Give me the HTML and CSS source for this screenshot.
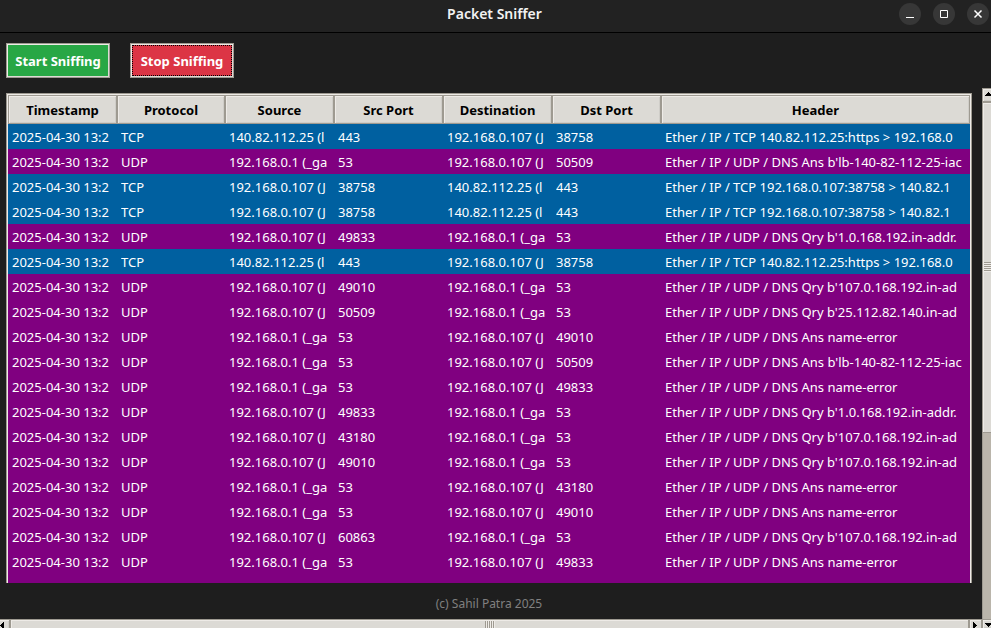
FILE: index.html
```
<!DOCTYPE html>
<html lang="en">
<head>
<meta charset="utf-8">
<title>Packet Sniffer</title>
<link rel="stylesheet" href="styles.css">
</head>
<body>
<div class="window">
  <header class="titlebar">
    <h1 class="title">Packet Sniffer</h1>
    <div class="window-controls">
      <button class="control" type="button" aria-label="Minimize"><svg viewBox="0 0 22 22"><path d="M7 14.5h8"/></svg></button>
      <button class="control" type="button" aria-label="Maximize"><svg viewBox="0 0 22 22"><path d="M7.5 7.5h7v7h-7z"/></svg></button>
      <button class="control" type="button" aria-label="Close"><svg viewBox="0 0 22 22"><path class="cross" d="M7.5 7.5l7 7m0-7l-7 7"/></svg></button>
    </div>
  </header>
  <div class="toolbar">
    <button class="action start" type="button">Start Sniffing</button>
    <button class="action stop" type="button">Stop Sniffing</button>
  </div>
  <div class="view">
    <main class="content">
      <div class="tree">
        <table class="packets">
          <colgroup><col class="c-a"><col class="c-b"><col class="c-a"><col class="c-a"><col class="c-a"><col class="c-a"><col></colgroup>
          <thead><tr><th>Timestamp</th><th>Protocol</th><th>Source</th><th>Src Port</th><th>Destination</th><th>Dst Port</th><th>Header</th></tr></thead>
          <tbody id="rows"></tbody>
        </table>
      </div>
      <footer class="footer">(c) Sahil Patra 2025</footer>
    </main>
    <div class="vscroll">
      <span class="vbutton"><svg class="arrow" viewBox="0 0 9 5"><path d="M4 0h1v1h1v1h1v1h1v1H1V3h1V2h1V1h1z"/></svg></span>
      <div class="vtrack"><div class="vthumb"></div></div>
    </div>
    <div class="hscroll">
      <span class="hbutton left"><svg class="side" viewBox="0 0 5 8"><path d="M4 0v7H3V6H2V5H1V4H0V3h1V2h1V1h1V0z"/></svg></span>
      <div class="hthumb"></div>
      <span class="hbutton right"><svg class="side" viewBox="0 0 5 8"><path d="M0 0h1v1h1v1h1v1h1v1H3v1H2v1H1v1H0z"/></svg></span>
    </div>
    <span class="down"><svg class="arrow" viewBox="0 0 9 5"><path d="M1 0h7v1H7v1H6v1H5v1H4V3H3V2H2V1H1z"/></svg></span>
  </div>
</div>
<script src="packets.js"></script>
</body>
</html>
```
FILE: packets.js
```
const time = "2025-04-30 13:2";
const local = "192.168.0.107 (J";
const gateway = "192.168.0.1 (_ga";
const remote = "140.82.112.25 (l";
const https = "Ether / IP / TCP 140.82.112.25:https > 192.168.0";
const reply = "Ether / IP / TCP 192.168.0.107:38758 > 140.82.1";
const dns = "Ether / IP / UDP / DNS ";
const nameError = dns + "Ans name-error";
const ansLb = dns + "Ans b'lb-140-82-112-25-iac";
const qryGateway = dns + "Qry b'1.0.168.192.in-addr.";
const qryLocal = dns + "Qry b'107.0.168.192.in-ad";
const qryRemote = dns + "Qry b'25.112.82.140.in-ad";

const packets = [
  [time, "TCP", remote, 443, local, 38758, https],
  [time, "UDP", gateway, 53, local, 50509, ansLb],
  [time, "TCP", local, 38758, remote, 443, reply],
  [time, "TCP", local, 38758, remote, 443, reply],
  [time, "UDP", local, 49833, gateway, 53, qryGateway],
  [time, "TCP", remote, 443, local, 38758, https],
  [time, "UDP", local, 49010, gateway, 53, qryLocal],
  [time, "UDP", local, 50509, gateway, 53, qryRemote],
  [time, "UDP", gateway, 53, local, 49010, nameError],
  [time, "UDP", gateway, 53, local, 50509, ansLb],
  [time, "UDP", gateway, 53, local, 49833, nameError],
  [time, "UDP", local, 49833, gateway, 53, qryGateway],
  [time, "UDP", local, 43180, gateway, 53, qryLocal],
  [time, "UDP", local, 49010, gateway, 53, qryLocal],
  [time, "UDP", gateway, 53, local, 43180, nameError],
  [time, "UDP", gateway, 53, local, 49010, nameError],
  [time, "UDP", local, 60863, gateway, 53, qryLocal],
  [time, "UDP", gateway, 53, local, 49833, nameError],
  ["", "", "", "", "", "", ""]
];

const body = document.getElementById("rows");
for (const packet of packets) {
  const row = body.insertRow();
  row.className = packet[1] === "TCP" ? "tcp" : "udp";
  for (const value of packet) {
    const text = document.createElement("div");
    text.className = "cell";
    text.textContent = value;
    row.insertCell().append(text);
  }
}
```
FILE: styles.css
```
* { box-sizing: border-box; }

:root {
  --frame: #dcdad5;
  --light: #eeebe7;
  --shade: #cfcdc8;
  --edge: #9e9a91;
  --trough: #bab5ab;
}

body {
  margin: 0;
  background: #1e1e1e;
  font-family: "Noto Sans", "Liberation Sans", sans-serif;
  font-size: 13px;
  color: #fff;
}

.window {
  display: flex;
  flex-direction: column;
  height: 100vh;
  overflow: hidden;
}

.titlebar {
  flex: none;
  display: grid;
  grid-template-columns: 1fr auto 1fr;
  align-items: center;
  height: 33px;
  padding: 0 2px 4px 0;
  background: #222;
  border-bottom: 1px solid #000;
}

.title {
  grid-column: 2;
  margin: 0;
  font-size: 14px;
  line-height: 20px;
  font-weight: 600;
  color: #f2f2f2;
}

.window-controls {
  display: flex;
  justify-content: flex-end;
  gap: 12px;
}

.control {
  width: 22px;
  height: 22px;
  padding: 0;
  border: 0;
  border-radius: 50%;
  background: #373737;
}

.control svg {
  display: block;
  width: 22px;
  height: 22px;
  fill: none;
  stroke: #fff;
}

.control .cross { stroke-width: 1.5; }

.toolbar {
  flex: none;
  display: flex;
  gap: 20px;
  padding: 10px 6px;
}

.action {
  width: 104px;
  height: 35px;
  padding: 0;
  font-family: inherit;
  font-size: 13px;
  font-weight: 700;
  color: #fff;
  white-space: nowrap;
  border: 1px solid var(--edge);
  box-shadow: inset 1px 1px var(--light), inset -1px -1px var(--frame);
}

.start { background: #28a745; }

.stop {
  background: #dc3545;
  outline: 1px dotted #000;
  outline-offset: -3px;
}

.view {
  flex: 1;
  min-height: 0;
  display: grid;
  grid-template-columns: minmax(0, 1fr) 9px;
  grid-template-rows: minmax(0, 1fr) 9px;
}

.content {
  display: flex;
  flex-direction: column;
  min-height: 0;
  padding: 5px 10px 0 6px;
}

.tree {
  flex: 1;
  min-height: 0;
  overflow: hidden;
  border: 1px solid var(--edge);
  border-bottom: 0;
  box-shadow: inset 0 1px var(--light);
  padding-top: 1px;
}

.packets {
  width: 100%;
  table-layout: fixed;
  border-collapse: separate;
  border-spacing: 0;
  border: solid var(--light);
  border-width: 0 1px;
}

.c-a { width: 109px; }
.c-b { width: 108px; }

th {
  height: 29px;
  padding: 0;
  font-weight: 700;
  color: #000;
  background: var(--frame);
  border: 1px solid var(--edge);
  box-shadow: inset 1px 1px var(--light), inset -1px -1px var(--shade);
}

td {
  height: 25px;
  padding: 0 4px;
}

.cell {
  height: 25px;
  line-height: 27px;
  overflow: hidden;
  white-space: nowrap;
}

.tcp { background: #0060a0; }
.udp { background: #800080; }

.footer {
  flex: none;
  height: 36px;
  padding-top: 12px;
  font-size: 12px;
  line-height: 18px;
  text-align: center;
  color: #808080;
}

.vscroll {
  display: flex;
  flex-direction: column;
  border-left: 1px solid var(--edge);
  background: var(--trough);
  min-height: 0;
  overflow: hidden;
}

.vbutton, .down {
  height: 14px;
  overflow: hidden;
  background: var(--frame);
  border: 1px solid var(--edge);
  border-width: 1px 0;
  box-shadow: inset 1px 1px var(--light), inset 0 -1px var(--shade);
}

.vbutton { flex: none; }

.down {
  height: 9px;
  border-left-width: 1px;
  border-bottom: 0;
}

.arrow {
  display: block;
  width: 9px;
  height: 5px;
  margin: 3px 0 0 1px;
}

.vtrack { flex: 1; }

.vthumb {
  height: 64%;
  border: 1px solid var(--edge);
  border-width: 1px 0;
  background: repeating-linear-gradient(var(--edge) 0 1px, var(--light) 1px 2px) 1px center / 8px 10px no-repeat, var(--frame);
  box-shadow: inset 1px 1px var(--light);
}

.hscroll {
  display: flex;
  min-width: 0;
  border-top: 1px solid var(--edge);
  background: var(--frame);
}

.hbutton {
  flex: none;
  width: 10px;
  overflow: hidden;
  border-right: 1px solid var(--edge);
  box-shadow: inset 0 1px var(--light), inset -1px 0 var(--shade);
}

.right {
  width: 13px;
  border-left: 1px solid var(--edge);
  box-shadow: inset 1px 1px var(--light);
}

.side {
  display: block;
  width: 5px;
  height: 8px;
  margin-top: 2px;
}

.right .side { margin-left: 3px; }

.hthumb {
  flex: 1;
  border: solid var(--edge);
  border-width: 0 1px;
  background: repeating-linear-gradient(90deg, var(--edge) 0 1px, var(--light) 1px 2px) center 1px / 10px 8px no-repeat, var(--frame);
  box-shadow: inset 1px 1px var(--light);
}
```
